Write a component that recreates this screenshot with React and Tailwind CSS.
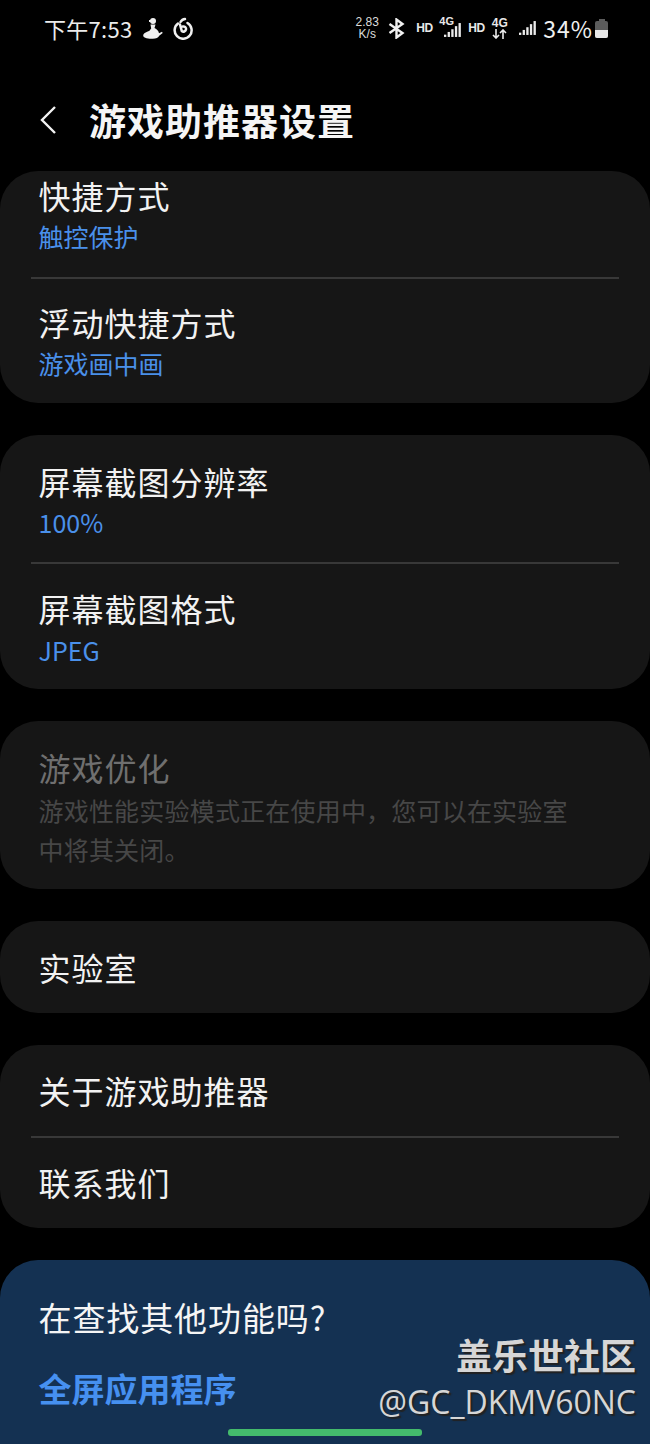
const font = { fontFamily: '"Noto Sans CJK SC", "Noto Sans", sans-serif' };
const latin = { fontFamily: '"Liberation Sans", sans-serif' };

function Signal({ w = 22, h = 18 }) {
  return (
    <svg width={w} height={h} viewBox="0 0 22 18" fill="#ececec">
      <rect x="0" y="15" width="3" height="3" />
      <rect x="4.7" y="11.5" width="3" height="6.5" />
      <rect x="9.4" y="8" width="3" height="10" />
      <rect x="14.1" y="4" width="3" height="14" />
      <rect x="18.8" y="0" width="3" height="18" />
    </svg>
  );
}

function Row({ title, sub, className = "", subGap = "mt-[3px]" }) {
  return (
    <div className={`pl-[38.5px] pr-[30px] ${className}`}>
      <div className="text-[32px] leading-[40px] tracking-[1px] text-[#f2f2f2]">{title}</div>
      {sub && <div className={`text-[25px] leading-[36px] text-[#4a90ea] ${subGap}`}>{sub}</div>}
    </div>
  );
}

function Card({ children, className = "" }) {
  return <div className={`rounded-[38px] bg-[#161616] overflow-hidden ${className}`}>{children}</div>;
}

function Divider() {
  return <div className="mx-[31px] h-[2px] bg-[#383838]" />;
}

export default function App() {
  return (
    <div className="relative w-[650px] h-[1444px] bg-black overflow-hidden" style={font}>
      <div className="flex items-center h-[56px] pl-[44px] pr-[42px] text-[#ececec]">
        <span className="text-[22px] leading-[56px] tracking-[0.3px]">下午7:53</span>
        <svg className="ml-[8px]" width="23" height="23" viewBox="0 0 23 23" fill="#f0f0f0">
          <circle cx="12" cy="4" r="3" />
          <path d="M8 3h2v2H8zM9.500 7.500h5L13.500 11c2.500 1 4 3 4.500 5.200l3-1.500.7 1.300-3.500 2.800c-.8 2-3 3-6.500 3s-9.500-.5-9.500-3c0-2.800 3.500-4 6-4.800l2-2.500z" />
        </svg>
        <svg className="ml-[7px]" width="23" height="23" viewBox="0 0 23 23" fill="none" stroke="#f0f0f0" strokeWidth="2.500" strokeLinecap="round">
          <path d="M14 2c-2 .2-3.500 1.200-4.500 3" />
          <path d="M7 6.500a8.500 8.500 0 1 0 9.500-.5" />
          <path d="M9 7.500l1.800 6.500a2.600 2.600 0 1 0 1-4.500" />
        </svg>
        <div className="ml-auto flex items-center text-[#e8e8e8]">
          <div className="mr-[9px] w-[24px] text-[12px] leading-[12px] text-center text-[#dddddd]" style={latin}>
            <div>2.83</div>
            <div>K/s</div>
          </div>
          <svg className="mr-[11px]" width="17" height="21" viewBox="0 0 17 21" fill="none" stroke="#f2f2f2" strokeWidth="2.400">
            <path d="M1.500 6 14.500 15 8.500 19.500V1.500L14.500 6 1.500 15" />
          </svg>
          <span className="mr-[8px] w-[15px] text-[12px] tracking-[-0.5px] font-bold" style={latin}>HD</span>
          <div className="relative mr-[7px] w-[22px] h-[22px] flex items-end justify-end">
            <span className="absolute left-0 top-[-1px] text-[11px] leading-[11px] font-bold" style={latin}>4G</span>
            <Signal w={17} h={18} />
          </div>
          <span className="mr-[9px] w-[15px] text-[12px] tracking-[-0.5px] font-bold" style={latin}>HD</span>
          <div className="mr-[12px] w-[15px] flex flex-col items-center" style={latin}>
            <span className="text-[12px] leading-[11px] font-bold">4G</span>
            <svg width="15" height="10" viewBox="0 0 15 10" fill="none" stroke="#ececec" strokeWidth="1.600">
              <path d="M4 0v9M1 6l3 3 3-3M11 10V1M8 4l3-3 3 3" />
            </svg>
          </div>
          <Signal w={17} h={16} />
          <span className="ml-[7px] text-[23px] leading-[56px] tracking-[1px] text-[#f0f0f0]">34%</span>
          <div className="ml-[2px] flex flex-col items-center">
            <div className="w-[6px] h-[2px] bg-[#5c5c5c]" />
            <div className="w-[13px] h-[17px] rounded-[2px] bg-[#5c5c5c] overflow-hidden flex items-end">
              <div className="w-full h-[8px] bg-[#e8e8e8]" />
            </div>
          </div>
        </div>
      </div>

      <div className="flex items-center h-[46px] mt-[41px] pl-[39px]">
        <svg width="20" height="30" viewBox="0 0 20 30" fill="none" stroke="#f2f2f2" strokeWidth="2.400">
          <path d="M16 2 3 15l13 13" />
        </svg>
        <h1 className="ml-[30px] text-[37px] leading-[46px] font-bold tracking-[1px] text-[#f5f5f5]">游戏助推器设置</h1>
      </div>

      <div className="mt-[28px] flex flex-col gap-[32px]">
        <Card className="h-[232px]">
          <Row title="快捷方式" sub="触控保护" className="pt-[4px]" />
          <div className="mt-[23px]"><Divider /></div>
          <Row title="浮动快捷方式" sub="游戏画中画" className="pt-[23px]" />
        </Card>

        <Card className="h-[254px]">
          <Row title="屏幕截图分辨率" sub="100%" className="pt-[26px]" />
          <div className="mt-[22px]"><Divider /></div>
          <Row title="屏幕截图格式" sub="JPEG" className="pt-[24px]" subGap="mt-[4px]" />
        </Card>

        <Card className="h-[168px] pt-[26px] pl-[38.5px]">
          <div className="text-[32px] leading-[40px] tracking-[1px] text-[#6f6f6f]">游戏优化</div>
          <div className="mt-[4px] w-[540px] text-[25px] leading-[39px] tracking-[0.2px] text-[#474747]">
            游戏性能实验模式正在使用中，您可以在实验室中将其关闭。
          </div>
        </Card>

        <Card className="h-[92px] flex items-center">
          <Row title="实验室" />
        </Card>

        <Card className="h-[183px]">
          <Row title="关于游戏助推器" className="pt-[25px]" />
          <div className="mt-[26px]"><Divider /></div>
          <Row title="联系我们" className="pt-[24px]" />
        </Card>

        <div className="h-[200px] rounded-t-[38px] bg-[#143152] pl-[38.5px] pt-[36px]">
          <div className="text-[33px] leading-[42px] tracking-[0.9px] text-[#f5f5f5]">在查找其他功能吗?</div>
          <div className="mt-[29px] text-[33px] leading-[42px] font-semibold text-[#4690f0]">全屏应用程序</div>
        </div>
      </div>

      <div className="absolute right-[14px] top-[1331px] text-right text-[#d6d6d6]" style={{ textShadow: "2px 2px 1px #222222" }}>
        <div className="text-[36px] leading-[46px] font-bold">盖乐世社区</div>
        <div className="mt-[5px] text-[32px] leading-[40px]" style={{ fontFamily: '"Open Sans", sans-serif' }}>@GC_DKMV60NC</div>
      </div>

      <div className="absolute left-[228px] top-[1429px] w-[194px] h-[7px] rounded-[3px] bg-[#44bb6c]" />
    </div>
  );
}
